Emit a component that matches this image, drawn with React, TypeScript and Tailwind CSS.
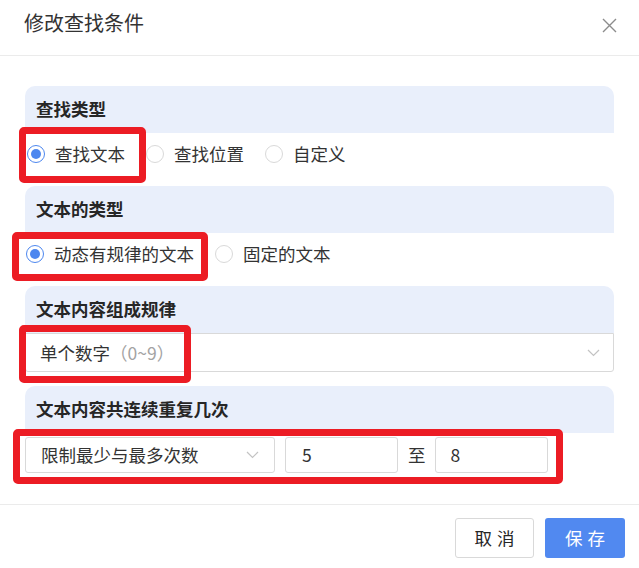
import React from "react";

// ==============================================================================================================
// && Small pieces
function Radio({ label, checked }: { label: string; checked?: boolean }) {
  return (
    <div className="flex items-center gap-[10px] mr-[21px]">
      <span
        className={`flex items-center justify-center w-[18px] h-[18px] rounded-full border bg-white ${
          checked ? "border-[#4d87ef]" : "border-[#d9d9d9]"
        }`}
      >
        {checked && <span className="w-[10px] h-[10px] rounded-full bg-[#4d87ef]" />}
      </span>
      <span className="text-[17.5px] leading-[24px]">{label}</span>
    </div>
  );
}

function Chevron() {
  return (
    <svg width="13" height="8" viewBox="0 0 13 8" fill="none">
      <polyline points="1,1 6.5,6.5 12,1" stroke="#c3c3c3" strokeWidth="1.2" />
    </svg>
  );
}

function SectionTitle({ children }: { children: React.ReactNode }) {
  return (
    <div className="h-[47px] bg-[#e9effb] rounded-t-[10px] flex items-center pl-[11px] font-bold text-[17.5px] text-[#262626]">
      {children}
    </div>
  );
}

// red annotation frames drawn over the form
function Mark({ className }: { className: string }) {
  return (
    <div
      className={`absolute border-[7px] border-[#ec1c24] rounded-[5px] pointer-events-none ${className}`}
    />
  );
}

export default function App() {
  /*//^ ================================
                                   App => Dialog Jsx
                                ================================ //*/
  return (
    <div className="relative w-[639px] h-[568px] bg-white text-[#333] font-['Noto_Sans_CJK_SC','Microsoft_YaHei',sans-serif] overflow-hidden">
      {/* //^ ===> Header */}
      <div className="h-[56px] border-b border-[#ebebeb] flex items-start justify-between pl-6 pr-[22px] pt-[9px]">
        <h1 className="text-[20px] leading-[28px] text-[#333]">修改查找条件</h1>
        <svg className="mt-[9px]" width="15" height="15" viewBox="0 0 15 15">
          <path d="M1 1 L14 14 M14 1 L1 14" stroke="#8c8c8c" strokeWidth="1.4" />
        </svg>
      </div>

      {/* //^ ===> Body */}
      <div className="px-[25px] pt-[30px]">
        {/* 查找类型 */}
        <div className="mb-[12px]">
          <SectionTitle>查找类型</SectionTitle>
          <div className="h-[41px] flex items-center pl-[2px]">
            <Radio label="查找文本" checked />
            <Radio label="查找位置" />
            <Radio label="自定义" />
          </div>
        </div>

        {/* 文本的类型 */}
        <div className="mb-[12px]">
          <SectionTitle>文本的类型</SectionTitle>
          <div className="h-[41px] flex items-center pl-[1px]">
            <Radio label="动态有规律的文本" checked />
            <Radio label="固定的文本" />
          </div>
        </div>

        {/* 文本内容组成规律 */}
        <div className="mb-[14px]">
          <SectionTitle>文本内容组成规律</SectionTitle>
          <div className="h-[39px] border border-[#d9d9d9] rounded-b-[3px] flex items-center justify-between pl-[14px] pr-[13px]">
            <span className="text-[17.5px] leading-[24px]">
              单个数字<span className="text-[#a3a3a3]">（0~9）</span>
            </span>
            <Chevron />
          </div>
        </div>

        {/* 文本内容共连续重复几次 */}
        <div>
          <SectionTitle>文本内容共连续重复几次</SectionTitle>
          <div className="mt-[4px] flex items-center">
            <div className="w-[250px] h-[36px] border border-[#d9d9d9] rounded-[3px] flex items-center justify-between pl-[15px] pr-[15px]">
              <span className="text-[17.5px] leading-[24px]">限制最少与最多次数</span>
              <Chevron />
            </div>
            <div className="ml-[10px] w-[113px] h-[36px] border border-[#d9d9d9] rounded-[3px] flex items-center pl-[16px] text-[17.5px]">
              5
            </div>
            <span className="ml-[10px] mr-[9px] text-[17.5px] leading-[24px]">至</span>
            <div className="w-[113px] h-[36px] border border-[#d9d9d9] rounded-[3px] flex items-center pl-[15px] text-[17.5px]">
              8
            </div>
          </div>
        </div>
      </div>

      {/* //^ ===> Footer */}
      <div className="mt-[31px] border-t border-[#ebebeb] pt-[13px] pr-[14px] flex justify-end gap-[11px]">
        <button className="w-[79px] h-[40px] border border-[#d9d9d9] rounded-[3px] bg-white text-[17.5px] tracking-[5px] pl-[5px] text-[#262626]">
          取消
        </button>
        <button className="w-[80px] h-[40px] rounded-[3px] bg-[#5189f0] text-white text-[17.5px] tracking-[5px] pl-[5px]">
          保存
        </button>
      </div>

      {/* //!! Annotation frames */}
      <Mark className="left-[19px] top-[127px] w-[127px] h-[56px]" />
      <Mark className="left-[12px] top-[232px] w-[196px] h-[49px]" />
      <Mark className="left-[19px] top-[325px] w-[172px] h-[58px]" />
      <Mark className="left-[13px] top-[429px] w-[550px] h-[55px]" />
    </div>
  );
}
